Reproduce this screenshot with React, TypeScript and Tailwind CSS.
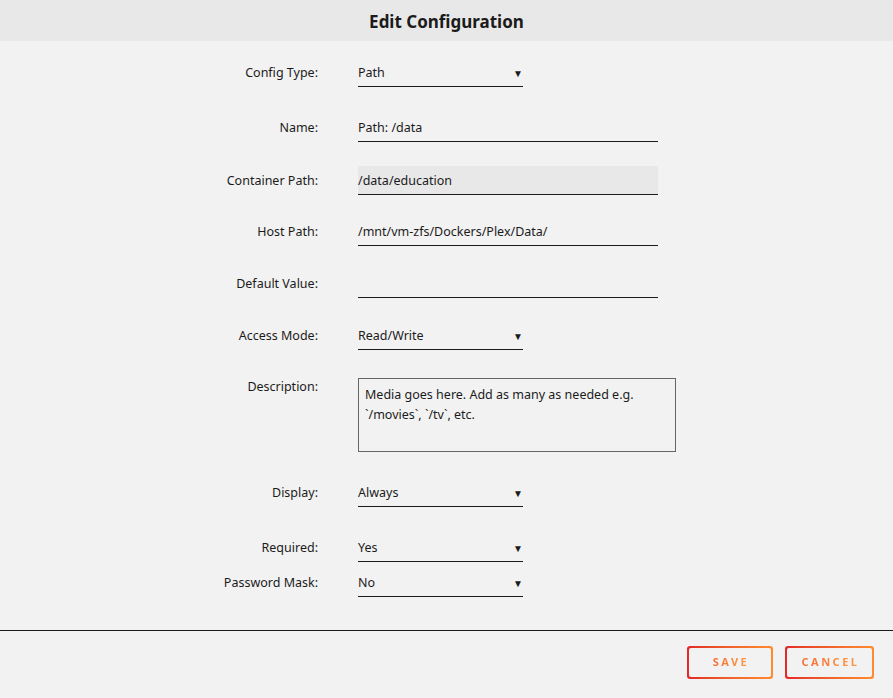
import React from 'react';

const font = { fontFamily: '"Noto Sans", "Open Sans", sans-serif' };

interface RowProps {
    label: string;
    className?: string;
    top?: boolean;
    children: React.ReactNode;
}

const Row: React.FC<RowProps> = ({ label, className = '', top = false, children }) => (
    <div className={`flex ${top ? 'items-start' : 'items-center'} ${className}`}>
        <div className={`w-[318px] shrink-0 text-right text-[12.5px] text-[#1c1b1b] ${top ? '' : 'pt-[2px]'}`}>{label}</div>
        <div className="ml-[40px]">{children}</div>
    </div>
);

const Select: React.FC<{ value: string }> = ({ value }) => (
    <div className="w-[165px] h-[29px] pt-[2px] border-b border-[#1c1b1b] flex items-center justify-between">
        <span className="text-[12.5px] text-[#1c1b1b]">{value}</span>
        <span className="text-[10px] text-[#1c1b1b] leading-none">▼</span>
    </div>
);

const TextInput: React.FC<{ value?: string; shaded?: boolean }> = ({ value = '', shaded = false }) => (
    <div className={`w-[300px] h-[29px] pt-[2px] border-b border-[#1c1b1b] flex items-center text-[12.5px] text-[#1c1b1b] ${shaded ? 'bg-[#e8e8e8]' : ''}`}>
        {value}
    </div>
);

const GradButton: React.FC<{ label: string; w: string }> = ({ label, w }) => (
    <div className={`bg-gradient-to-r from-[#e22828] to-[#ff8c2f] p-[2px] rounded-[3px] ${w} h-[33px]`}>
        <div className="w-full h-full bg-[#f2f2f2] rounded-[2px] flex items-center justify-center">
            <span className="text-[11px] font-bold tracking-[2.5px] bg-gradient-to-r from-[#f46a36] to-[#ff9a40] bg-clip-text text-transparent pl-[2px]">
                {label}
            </span>
        </div>
    </div>
);

const App: React.FC = () => {
    return (
        <div className="w-[893px] h-[698px] bg-[#f2f2f2] flex flex-col overflow-hidden" style={font}>
            <div className="h-[41px] bg-[#e8e8e8] flex items-center justify-center pt-[2px]">
                <span className="text-[17px] font-bold text-[#1c1b1b]">Edit Configuration</span>
            </div>

            <div className="flex flex-col">
                <Row label="Config Type:" className="mt-[17px]"><Select value="Path" /></Row>
                <Row label="Name:" className="mt-[26px]"><TextInput value="Path: /data" /></Row>
                <Row label="Container Path:" className="mt-[24px]"><TextInput value="/data/education" shaded /></Row>
                <Row label="Host Path:" className="mt-[22px]"><TextInput value="/mnt/vm-zfs/Dockers/Plex/Data/" /></Row>
                <Row label="Default Value:" className="mt-[23px]"><TextInput /></Row>
                <Row label="Access Mode:" className="mt-[23px]"><Select value="Read/Write" /></Row>
                <Row label="Description:" className="mt-[28px]" top>
                    <div className="w-[318px] h-[74px] border border-[#666] px-[6px] pt-[6px] text-[12.5px] leading-[20px] text-[#1c1b1b]">
                        Media goes here. Add as many as needed e.g. `/movies`, `/tv`, etc.
                    </div>
                </Row>
                <Row label="Display:" className="mt-[26px]"><Select value="Always" /></Row>
                <Row label="Required:" className="mt-[26px]"><Select value="Yes" /></Row>
                <Row label="Password Mask:" className="mt-[6px]"><Select value="No" /></Row>
            </div>

            <div className="mt-[33px] border-t border-[#1c1b1b] flex justify-end gap-[12px] pr-[19px] pt-[15px]">
                <GradButton label="SAVE" w="w-[86px]" />
                <GradButton label="CANCEL" w="w-[89px]" />
            </div>
        </div>
    );
};

export default App;
